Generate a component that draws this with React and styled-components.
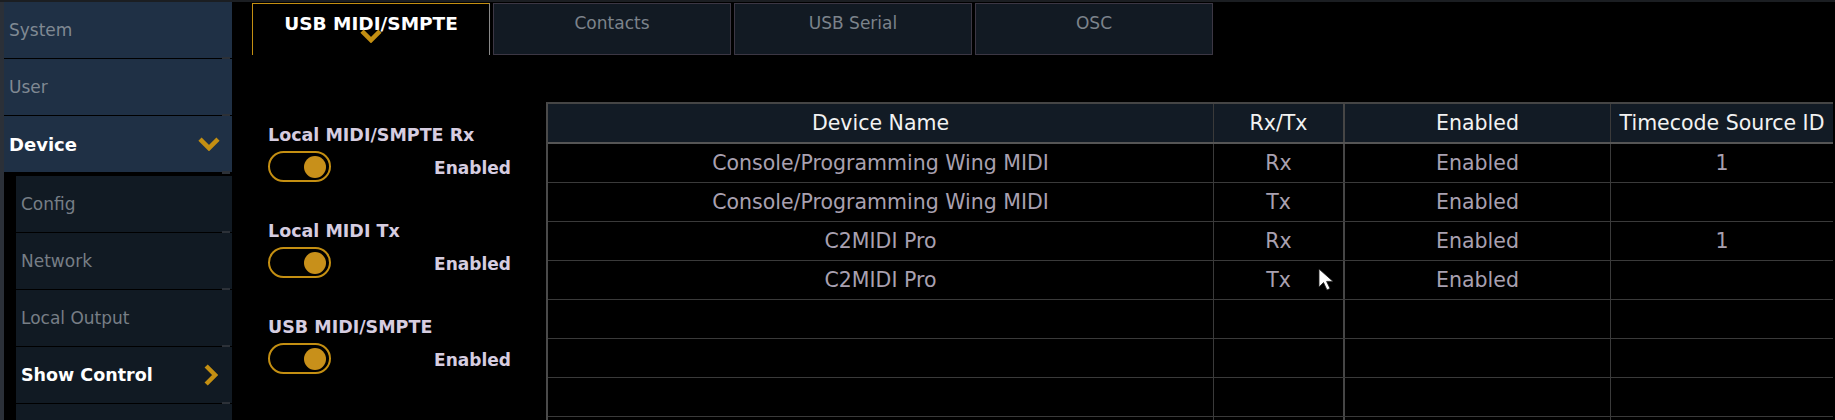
import React from 'react';
import styled, { createGlobalStyle } from 'styled-components';

const GlobalStyle = createGlobalStyle`
  html, body {
    margin: 0;
    padding: 0;
    background: #000;
  }
  body {
    width: 1835px;
    height: 420px;
    overflow: hidden;
    font-family: "DejaVu Sans", Verdana, sans-serif;
  }
`;

const navMain = [
  { label: 'System' },
  { label: 'User' },
  { label: 'Device', active: true, chevron: 'down' },
];

const navSub = [
  { label: 'Config' },
  { label: 'Network' },
  { label: 'Local Output' },
  { label: 'Show Control', active: true, chevron: 'right' },
  { label: '' },
];

const tabs = ['USB MIDI/SMPTE', 'Contacts', 'USB Serial', 'OSC'];

const switches = ['Local MIDI/SMPTE Rx', 'Local MIDI Tx', 'USB MIDI/SMPTE'];

const columns = ['Device Name', 'Rx/Tx', 'Enabled', 'Timecode Source ID'];

const rows = [
  ['Console/Programming Wing MIDI', 'Rx', 'Enabled', '1'],
  ['Console/Programming Wing MIDI', 'Tx', 'Enabled', ''],
  ['C2MIDI Pro', 'Rx', 'Enabled', '1'],
  ['C2MIDI Pro', 'Tx', 'Enabled', ''],
  ['', '', '', ''],
  ['', '', '', ''],
  ['', '', '', ''],
  ['', '', '', ''],
];

const Chevron = ({ dir = 'down', size = 22 }) =>
  dir === 'down' ? (
    <svg width={size} height={size * 0.65} viewBox="0 0 22 14">
      <polyline points="2,2 11,11 20,2" fill="none" stroke="#c48f12" strokeWidth="4.5" />
    </svg>
  ) : (
    <svg width={size * 0.65} height={size} viewBox="0 0 14 22">
      <polyline points="2,2 11,11 2,20" fill="none" stroke="#c48f12" strokeWidth="4.5" />
    </svg>
  );

const Cursor = () => (
  <svg width="18" height="25" viewBox="0 0 18 25">
    <path d="M1 1 L1 19 L5.5 14.5 L9 22 L12 20.5 L8.6 13.4 L15 13.4 Z" fill="#fff" stroke="#222" strokeWidth="0.8" />
  </svg>
);

const App = () => (
  <>
    <GlobalStyle />
    <Page>
      <TopStrip />
      <Body>
        <Sidebar>
          <NavGroup>
            {navMain.map((item) => (
              <NavItem key={item.label} $active={item.active}>
                {item.label}
                {item.chevron && <Chevron dir={item.chevron} />}
              </NavItem>
            ))}
          </NavGroup>
          <SubGroup>
            {navSub.map((item, i) => (
              <SubItem key={i} $active={item.active}>
                {item.label}
                {item.chevron && <Chevron dir={item.chevron} />}
              </SubItem>
            ))}
          </SubGroup>
        </Sidebar>

        <Main>
          <TabBar>
            {tabs.map((t, i) => (
              <Tab key={t} $active={i === 0}>
                {t}
                {i === 0 && (
                  <TabMarker>
                    <Chevron dir="down" />
                  </TabMarker>
                )}
              </Tab>
            ))}
          </TabBar>

          <Content>
            <SwitchPanel>
              {switches.map((s) => (
                <SwitchGroup key={s}>
                  <SwitchLabel>{s}</SwitchLabel>
                  <SwitchRow>
                    <Toggle>
                      <Knob />
                    </Toggle>
                    <SwitchState>Enabled</SwitchState>
                  </SwitchRow>
                </SwitchGroup>
              ))}
            </SwitchPanel>

            <Table>
              <HeaderRow>
                {columns.map((c, i) => (
                  <HeadCell key={c} $col={i}>
                    {c}
                  </HeadCell>
                ))}
              </HeaderRow>
              {rows.map((r, ri) => (
                <Row key={ri}>
                  {r.map((v, ci) => (
                    <Cell key={ci} $col={ci}>
                      {v}
                    </Cell>
                  ))}
                </Row>
              ))}
              <PointerSpot>
                <Cursor />
              </PointerSpot>
            </Table>
          </Content>
        </Main>
      </Body>
    </Page>
  </>
);

const Page = styled.div`
  width: 1835px;
  height: 420px;
  overflow: hidden;
  background: #000;
  display: flex;
  flex-direction: column;
`;

const TopStrip = styled.div`
  height: 2px;
  background: #1b1e22;
  flex-shrink: 0;
`;

const Body = styled.div`
  display: flex;
  flex: 1;
  min-height: 0;
`;

const Sidebar = styled.nav`
  width: 228px;
  flex-shrink: 0;
  border-left: 4px solid #2b3038;
  display: flex;
  flex-direction: column;
  gap: 4px;
`;

const NavGroup = styled.div`
  display: flex;
  flex-direction: column;
  gap: 1px;
`;

const rowBase = `
  height: 56px;
  box-sizing: border-box;
  display: flex;
  align-items: center;
  justify-content: space-between;
  position: relative;
  white-space: nowrap;
  &::after {
    content: '';
    position: absolute;
    right: 2px;
    bottom: -2px;
    width: 8px;
    height: 3px;
    background: #2c3138;
  }
`;

const NavItem = styled.div`
  ${rowBase}
  padding: 0 12px 0 5px;
  background: #1f3045;
  color: ${(p) => (p.$active ? '#ffffff' : '#808993')};
  font-size: ${(p) => (p.$active ? '18px' : '17px')};
  font-weight: ${(p) => (p.$active ? 700 : 400)};
`;

const SubGroup = styled.div`
  display: flex;
  flex-direction: column;
  gap: 1px;
  margin-left: 12px;
`;

const SubItem = styled.div`
  ${rowBase}
  padding: 0 14px 0 5px;
  background: #111a23;
  color: ${(p) => (p.$active ? '#ffffff' : '#777e86')};
  font-size: ${(p) => (p.$active ? '17.5px' : '17px')};
  font-weight: ${(p) => (p.$active ? 700 : 400)};
`;

const Main = styled.div`
  flex: 1;
  min-width: 0;
  padding-left: 20px;
  display: flex;
  flex-direction: column;
`;

const TabBar = styled.div`
  display: flex;
  gap: 3px;
  margin-top: 1px;
  height: 52px;
  flex-shrink: 0;
`;

const Tab = styled.div`
  position: relative;
  width: 238px;
  box-sizing: border-box;
  display: flex;
  justify-content: center;
  padding-top: 9px;
  white-space: nowrap;
  font-size: ${(p) => (p.$active ? '18.5px' : '17px')};
  font-weight: ${(p) => (p.$active ? 700 : 400)};
  color: ${(p) => (p.$active ? '#ffffff' : '#7c838b')};
  background: ${(p) => (p.$active ? '#000' : '#121a23')};
  border: 1px solid ${(p) => (p.$active ? '#c48f12' : '#3c3744')};
  border-bottom: ${(p) => (p.$active ? 'none' : '1px solid #3c3744')};
  border-right-color: ${(p) => (p.$active ? '#8a8a8a' : '#3c3744')};
`;

const TabMarker = styled.div`
  position: absolute;
  left: 50%;
  top: 25px;
  transform: translateX(-50%);
  display: flex;
`;

const Content = styled.div`
  display: flex;
  margin-top: 47px;
`;

const SwitchPanel = styled.div`
  width: 243px;
  padding-left: 16px;
  margin-right: 35px;
  flex-shrink: 0;
  display: flex;
  flex-direction: column;
  gap: 38px;
  padding-top: 22px;
`;

const SwitchGroup = styled.div`
  display: flex;
  flex-direction: column;
  gap: 5px;
`;

const SwitchLabel = styled.div`
  height: 22px;
  line-height: 22px;
  font-size: 17.5px;
  font-weight: 700;
  color: #d6cde0;
  white-space: nowrap;
`;

const SwitchRow = styled.div`
  display: flex;
  align-items: center;
  justify-content: space-between;
`;

const Toggle = styled.div`
  width: 63px;
  height: 31px;
  box-sizing: border-box;
  border: 2.5px solid #c48f12;
  border-radius: 16px;
  display: flex;
  align-items: center;
  justify-content: flex-end;
  padding-right: 3px;
`;

const Knob = styled.div`
  width: 22px;
  height: 22px;
  border-radius: 50%;
  background: #c8901a;
`;

const SwitchState = styled.div`
  font-size: 17px;
  font-weight: 700;
  color: #d6cde0;
  padding-top: 3px;
`;

const colWidths = ['666px', '131px', '266px', '222px'];
const colBorder = ['1px solid #3a3a3a', '2px solid #464646', '1px solid #3a3a3a', 'none'];

const Table = styled.div`
  position: relative;
  flex-shrink: 0;
  border-left: 2px solid #4a4a4a;
  border-top: 2px solid #454545;
  display: flex;
  flex-direction: column;
`;

const HeaderRow = styled.div`
  display: flex;
  height: 40px;
  box-sizing: border-box;
  background: #121b25;
  border-bottom: 2px solid #555;
`;

const Row = styled.div`
  display: flex;
  height: 39px;
  box-sizing: border-box;
  border-bottom: 1px solid #3a3a3a;
`;

const cellBase = `
  box-sizing: border-box;
  display: flex;
  align-items: center;
  justify-content: center;
  white-space: nowrap;
`;

const HeadCell = styled.div`
  ${cellBase}
  width: ${(p) => colWidths[p.$col]};
  border-right: ${(p) => colBorder[p.$col]};
  color: #f2f2f2;
  font-size: 20.5px;
`;

const Cell = styled.div`
  ${cellBase}
  width: ${(p) => colWidths[p.$col]};
  border-right: ${(p) => colBorder[p.$col]};
  color: #a9a0b0;
  font-size: 20.5px;
`;

const PointerSpot = styled.div`
  position: absolute;
  left: 770px;
  top: 164px;
  display: flex;
`;

export default App;
